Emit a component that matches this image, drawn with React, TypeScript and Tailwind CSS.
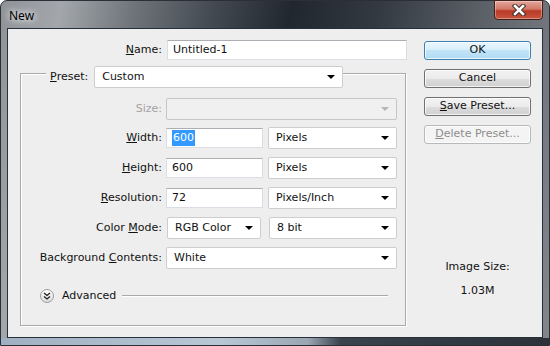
import React from "react";

function Arrow({ disabled }: { disabled?: boolean }) {
  return (
    <span
      className={`w-0 h-0 border-x-[4px] border-x-transparent border-t-[4px] ${
        disabled ? "border-t-[#b5b5b5]" : "border-t-black"
      }`}
    />
  );
}

function Combo({
  text,
  className,
  disabled,
}: {
  text?: string;
  className: string;
  disabled?: boolean;
}) {
  return (
    <div
      className={`${className} h-[22px] flex items-center justify-between pl-[7px] pr-[7px] border rounded-[2px] ${
        disabled
          ? "bg-[#f0f0f0] border-[#c6c6c6]"
          : "bg-white border-[#cdcdcd]"
      }`}
    >
      <span>{text}</span>
      <Arrow disabled={disabled} />
    </div>
  );
}

function Field({
  children,
  className,
}: {
  children: React.ReactNode;
  className: string;
}) {
  return (
    <div
      className={`${className} h-[20px] flex items-center pl-[5px] bg-white border border-[#dadee4] border-t-[#acaeb4] rounded-[1px]`}
    >
      {children}
    </div>
  );
}

function Label({ children }: { children: React.ReactNode }) {
  return <div className="w-[141px] text-right">{children}</div>;
}

function Button({
  children,
  variant,
}: {
  children: React.ReactNode;
  variant?: "default" | "disabled";
}) {
  const look =
    variant === "default"
      ? "border-[#3c7fb1] bg-[linear-gradient(#ebf6fd_0%,#d6eefb_50%,#c2e4f7_50%,#b0dbf4_100%)]"
      : variant === "disabled"
      ? "border-[#b6babd] bg-[#f4f4f4] text-[#8d8d8d]"
      : "border-[#707070] bg-[linear-gradient(#f3f3f3_0%,#ebebeb_50%,#dddddd_50%,#d0d0d0_100%)]";
  return (
    <div
      className={`w-[107px] h-[19px] flex items-center justify-center border rounded-[3px] shadow-[inset_0_0_0_1px_rgba(255,255,255,0.75)] ${look}`}
    >
      {children}
    </div>
  );
}

export default function App() {
  return (
    <div className="w-[550px] h-[346px] bg-white font-['DejaVu_Sans',sans-serif] text-[11px] text-[#111]">
      <div className="w-full h-full flex flex-col rounded-t-[7px] border border-[#2b3036] bg-[linear-gradient(100deg,#8f9398_0%,#a3a7ab_10%,#6f747a_22%,#434a52_35%,#20272f_48%,#323941_62%,#5d6269_80%,#84888d_100%)]">
        <div className="h-[27px] flex justify-between items-start pl-[2px] pr-[6px]">
          <span className="pt-[6px] pl-[6px] text-[12px] text-black font-['Noto_Sans',sans-serif] [text-shadow:0_0_6px_#fff,0_0_10px_rgba(255,255,255,0.8)]">
            New
          </span>
          <div className="w-[49px] h-[20px] -mt-px flex items-center justify-center rounded-b-[4px] border border-[#43201a] bg-[linear-gradient(#e3a79c_0%,#d27767_45%,#b83a26_55%,#c9553f_100%)] shadow-[inset_0_0_0_1px_rgba(255,255,255,0.35)]">
            <svg width="16" height="12" viewBox="0 0 16 12">
              <path d="M4 2 L12 10 M12 2 L4 10" stroke="#3a2a28" strokeWidth="4.5" strokeLinecap="square" />
              <path d="M4 2 L12 10 M12 2 L4 10" stroke="#fff" strokeWidth="2.6" strokeLinecap="square" />
            </svg>
          </div>
        </div>

        <div className="flex-1 px-[6px] flex">
          <div className="flex-1 flex bg-[#eeeeee] border border-[#26313c]">
            {/* left column */}
            <div className="w-[400px] pl-[12px] pt-[11px] flex flex-col">
              <div className="flex items-center">
                <div className="w-[142px] text-right">
                  <u>N</u>ame:
                </div>
                <Field className="ml-[5px] w-[240px]">Untitled-1</Field>
              </div>

              <div className="mt-[13px] w-[386px] h-[253px] border border-[#aaaaaa] shadow-[1px_1px_0_#fff,inset_1px_1px_0_#fff] flex flex-col">
                <div className="-mt-[8px] flex items-center">
                  <div className="ml-[25px] pl-[4px] pr-[6px] bg-[#eeeeee] h-[22px] flex items-center">
                    <u>P</u>reset:
                  </div>
                  <Combo className="w-[249px]" text="Custom" />
                </div>

                <div className="mt-[10px] flex flex-col gap-[8px]">
                  <div className="flex items-center">
                    <Label>
                      <span className="text-[#a3a3a3]">Size:</span>
                    </Label>
                    <Combo className="ml-[4px] w-[231px]" disabled />
                  </div>
                  <div className="flex items-center -mt-px">
                    <Label>
                      <u>W</u>idth:
                    </Label>
                    <Field className="ml-[4px] w-[97px]">
                      <span className="bg-[#3399ff] text-white px-px">600</span>
                    </Field>
                    <Combo className="ml-[5px] w-[129px]" text="Pixels" />
                  </div>
                  <div className="flex items-center">
                    <Label>
                      <u>H</u>eight:
                    </Label>
                    <Field className="ml-[4px] w-[97px]">600</Field>
                    <Combo className="ml-[5px] w-[129px]" text="Pixels" />
                  </div>
                  <div className="flex items-center">
                    <Label>
                      <u>R</u>esolution:
                    </Label>
                    <Field className="ml-[4px] w-[97px]">72</Field>
                    <Combo className="ml-[5px] w-[129px]" text="Pixels/Inch" />
                  </div>
                  <div className="flex items-center">
                    <Label>
                      Color <u>M</u>ode:
                    </Label>
                    <Combo className="ml-[5px] w-[94px]" text="RGB Color" />
                    <Combo className="ml-[8px] w-[128px]" text="8 bit" />
                  </div>
                  <div className="flex items-center">
                    <Label>
                      Background <u>C</u>ontents:
                    </Label>
                    <Combo className="ml-[4px] w-[231px]" text="White" />
                  </div>
                </div>

                <div className="mt-[19px] flex items-center">
                  <div className="ml-[19px] w-[14px] h-[14px] rounded-full border border-[#9c9c9c] bg-[linear-gradient(#ffffff,#dcdcdc)] flex items-center justify-center">
                    <svg width="8" height="8" viewBox="0 0 8 8">
                      <path d="M1 1 L4 3.5 L7 1 M1 4.5 L4 7 L7 4.5" fill="none" stroke="#222" strokeWidth="1.3" />
                    </svg>
                  </div>
                  <span className="ml-[8px]">Advanced</span>
                  <div className="flex-1 ml-[6px] mr-[17px] border-t border-t-[#a9a9a9] border-b border-b-white" />
                </div>
              </div>
            </div>

            {/* right column */}
            <div className="pl-[16px] pt-[12px] flex flex-col">
              <div className="flex flex-col gap-[9px]">
                <Button variant="default">OK</Button>
                <Button>Cancel</Button>
                <Button>
                  <span>
                    <u>S</u>ave Preset...
                  </span>
                </Button>
                <Button variant="disabled">
                  <span>
                    <u>D</u>elete Preset...
                  </span>
                </Button>
              </div>
              <div className="mt-[115px] w-[107px] text-center">Image Size:</div>
              <div className="mt-[7px] w-[107px] text-center">1.03M</div>
            </div>
          </div>
        </div>

        <div className="h-[7px] bg-[linear-gradient(90deg,#9fb0c2_0%,#b9c7d5_40%,#9aa6b2_56%,#3a424b_62%,#2b323a_100%)]" />
      </div>
    </div>
  );
}
